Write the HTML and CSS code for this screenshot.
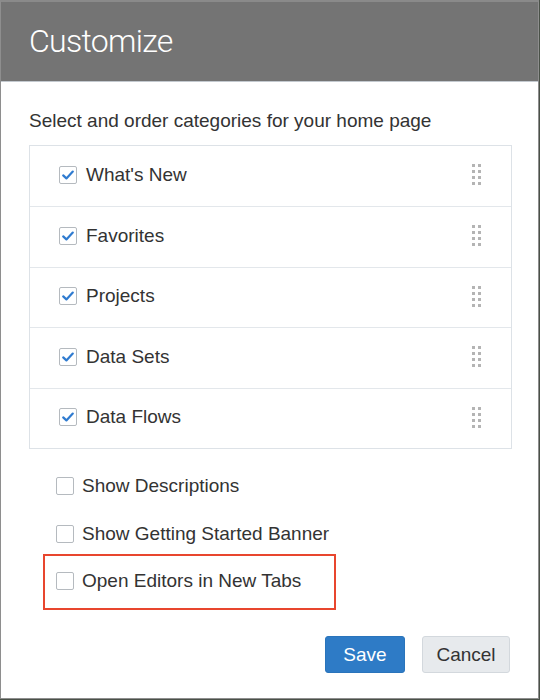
FILE: index.html
```html
<!DOCTYPE html>
<html>
<head>
<meta charset="utf-8">
<link rel="stylesheet" href="styles.css">
</head>
<body>
<div class="dialog">
  <div class="header"><h1 class="title">Customize</h1></div>
  <div class="content">
    <p class="intro">Select and order categories for your home page</p>
    <ul class="list">
      <li class="row"><span class="cb checked"><svg viewBox="0 0 18 18" width="18" height="18"><path d="M4.2 9.4 L7.4 12.4 L13.8 5.6" fill="none" stroke="#2f7bd0" stroke-width="2.2" stroke-linecap="round" stroke-linejoin="round"/></svg></span><span class="label">What's New</span><span class="handle"><i></i><i></i><i></i><i></i><i></i><i></i><i></i><i></i></span></li>
      <li class="row"><span class="cb checked"><svg viewBox="0 0 18 18" width="18" height="18"><path d="M4.2 9.4 L7.4 12.4 L13.8 5.6" fill="none" stroke="#2f7bd0" stroke-width="2.2" stroke-linecap="round" stroke-linejoin="round"/></svg></span><span class="label">Favorites</span><span class="handle"><i></i><i></i><i></i><i></i><i></i><i></i><i></i><i></i></span></li>
      <li class="row"><span class="cb checked"><svg viewBox="0 0 18 18" width="18" height="18"><path d="M4.2 9.4 L7.4 12.4 L13.8 5.6" fill="none" stroke="#2f7bd0" stroke-width="2.2" stroke-linecap="round" stroke-linejoin="round"/></svg></span><span class="label">Projects</span><span class="handle"><i></i><i></i><i></i><i></i><i></i><i></i><i></i><i></i></span></li>
      <li class="row"><span class="cb checked"><svg viewBox="0 0 18 18" width="18" height="18"><path d="M4.2 9.4 L7.4 12.4 L13.8 5.6" fill="none" stroke="#2f7bd0" stroke-width="2.2" stroke-linecap="round" stroke-linejoin="round"/></svg></span><span class="label">Data Sets</span><span class="handle"><i></i><i></i><i></i><i></i><i></i><i></i><i></i><i></i></span></li>
      <li class="row"><span class="cb checked"><svg viewBox="0 0 18 18" width="18" height="18"><path d="M4.2 9.4 L7.4 12.4 L13.8 5.6" fill="none" stroke="#2f7bd0" stroke-width="2.2" stroke-linecap="round" stroke-linejoin="round"/></svg></span><span class="label">Data Flows</span><span class="handle"><i></i><i></i><i></i><i></i><i></i><i></i><i></i><i></i></span></li>
    </ul>
    <div class="options">
      <div class="option"><span class="cb"></span><span class="label">Show Descriptions</span></div>
      <div class="option"><span class="cb"></span><span class="label">Show Getting Started Banner</span></div>
      <div class="option highlight"><span class="cb"></span><span class="label">Open Editors in New Tabs</span></div>
    </div>
    <div class="actions">
      <button class="btn primary">Save</button>
      <button class="btn secondary">Cancel</button>
    </div>
  </div>
</div>
</body>
</html>
```

FILE: styles.css
```css
* { box-sizing: border-box; }
html, body { margin: 0; padding: 0; }
body {
  background: #4a5148;
  width: 540px;
  height: 700px;
  font-family: "Liberation Sans", Arial, sans-serif;
  color: #333;
}
.dialog {
  width: 539px;
  height: 699px;
  background: #fff;
  border: 1px solid #8e8e8e;
  border-top: 2px solid #8a8a8a;
  display: flex;
  flex-direction: column;
}
.header {
  height: 80px;
  background: #747474;
  border-bottom: 1px solid #c3c9cf;
  padding-left: 28px;
  display: flex;
  align-items: center;
}
.title {
  margin: 0;
  font-family: Roboto, "Liberation Sans", sans-serif;
  font-weight: 300;
  font-size: 32px;
  letter-spacing: -0.7px;
  color: #fff;
  padding-bottom: 2px;
}
.content {
  padding: 0 28px 0 28px;
  display: flex;
  flex-direction: column;
}
.intro {
  margin: 28px 0 0 0;
  font-size: 19px;
  line-height: 22px;
}
.list {
  list-style: none;
  margin: 13px 0 0 0;
  padding: 0;
  width: 483px;
  border: 1px solid #dde2e7;
}
.row {
  height: 60px;
  display: flex;
  align-items: center;
  padding: 0 30px 3px 29px;
  border-top: 1px solid #e3e7eb;
}
.row:nth-child(2), .row:nth-child(4) { height: 61px; }
.row:first-child { border-top: none; }
.cb {
  width: 18px;
  height: 18px;
  border: 1px solid #b5babf;
  border-radius: 2px;
  background: #fff;
  flex: none;
  display: flex;
  align-items: center;
  justify-content: center;
}
.cb svg { display: block; margin: -1px; }
.label {
  font-size: 19px;
  line-height: 22px;
  margin-left: 9px;
  flex: 1;
}
.handle {
  width: 9px;
  display: grid;
  grid-template-columns: 3px 3px;
  column-gap: 3px;
  row-gap: 3px;
  flex: none;
}
.handle i {
  display: block;
  width: 3px;
  height: 3px;
  background: #b4b4b4;
}
.options {
  margin-top: 13px;
  display: flex;
  flex-direction: column;
}
.option {
  height: 48px;
  display: flex;
  align-items: center;
  padding-left: 27px;
}
.option .label { margin-left: 8px; flex: none; }
.option.highlight {
  height: 56px;
  margin: -4px 0 -4px 14px;
  width: 293px;
  border: 2px solid #e8462e;
  padding-left: 11px;
  padding-bottom: 2px;
}
.actions {
  margin-top: 30px;
  display: flex;
  justify-content: flex-end;
  gap: 17px;
}
.btn {
  height: 37px;
  border-radius: 3px;
  font-family: "Liberation Sans", Arial, sans-serif;
  font-size: 19px;
  padding: 0;
  cursor: pointer;
}
.primary {
  width: 80px;
  background: #2e7bc6;
  border: 1px solid #2a74bb;
  color: #fff;
}
.secondary {
  width: 88px;
  background: #e7eaed;
  border: 1px solid #d3d8dd;
  color: #333;
}
```
